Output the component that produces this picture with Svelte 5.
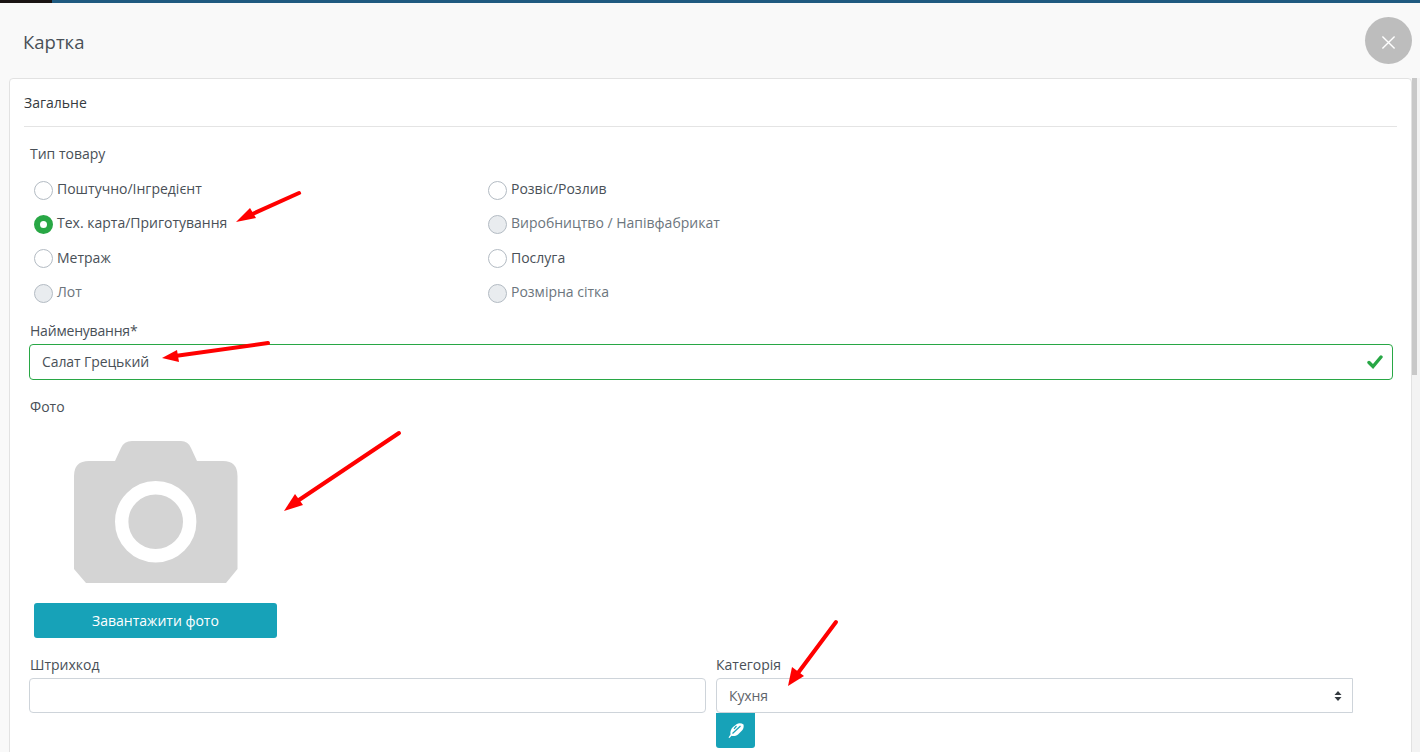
<script>
  const options = [
    { label: 'Поштучно/Інгредієнт', state: '' },
    { label: 'Розвіс/Розлив', state: '' },
    { label: 'Тех. карта/Приготування', state: 'checked' },
    { label: 'Виробництво / Напівфабрикат', state: 'disabled' },
    { label: 'Метраж', state: '' },
    { label: 'Послуга', state: '' },
    { label: 'Лот', state: 'disabled' },
    { label: 'Розмірна сітка', state: 'disabled' }
  ];
  const arrows = [
    'M299 193 L248 216', 'M268 343 L175 356', 'M399 433 L296 502', 'M836 622 L798 673'
  ];
  const heads = [
    '236,222 250,208 256,218', '162,358 177,350 179,362', '284,511 295,494 303,505', '788,686 792,667 804,676'
  ];
</script>

<div class="page">
  <div class="topbar"><span class="dark"></span></div>
  <header class="head">
    <h1>Картка</h1>
    <button class="close" aria-label="Закрити">
      <svg width="15" height="15" viewBox="0 0 16 16"><path d="M1.5 1.5 L14.5 14.5 M14.5 1.5 L1.5 14.5" stroke="#fff" stroke-width="1.5" fill="none"/></svg>
    </button>
  </header>
  <div class="body">
    <main class="card">
      <h2>Загальне</h2>
      <div class="form">
        <div class="lbl type-lbl">Тип товару</div>
        <div class="radios">
          {#each options as r}
            <div class="radio {r.state}"><span class="dot"></span><span>{r.label}</span></div>
          {/each}
        </div>
        <div class="lbl name-lbl">Найменування*</div>
        <div class="input valid">
          <span>Салат Грецький</span>
          <svg width="16" height="14" viewBox="0 0 16 14"><path d="M2 7.500 L6 11.500 L14 2" stroke="#28a745" stroke-width="3.400" stroke-linecap="round" fill="none"/></svg>
        </div>
        <div class="lbl photo-lbl">Фото</div>
        <div class="photo">
          <svg width="164" height="142" viewBox="0 0 164 142">
            <path d="M15 20 H41 L47 7 Q50 0 58 0 H107 Q114 0 117 7 L123 20 H149 Q163.500 20 163.500 35 V128 L152 142 H12 L0 128 V35 Q0 20 15 20 Z" fill="#d4d4d4"/>
            <circle cx="81.700" cy="80.700" r="34" fill="#d4d4d4" stroke="#fff" stroke-width="13.400"/>
          </svg>
        </div>
        <button class="upload">Завантажити фото</button>
        <div class="cols">
          <div class="col">
            <div class="lbl">Штрихкод</div>
            <div class="input plain"></div>
          </div>
          <div class="col">
            <div class="lbl">Категорія</div>
            <div class="input plain select">
              <span>Кухня</span>
              <svg width="8" height="10" viewBox="0 0 8 10"><path d="M4 0 L7.500 4 H0.500 Z M4 10 L0.500 6 H7.500 Z" fill="#343a40"/></svg>
            </div>
            <button class="edit" aria-label="Редагувати">
              <svg width="16" height="15" viewBox="0 0 16 15">
                <path d="M0.500 14.500 L2.500 11.500 C2 8.500 3 6 5 4 L8.500 1.200 C10.500 0 13.500 0 15.500 1.500 C16 3.500 15.500 6 14 7.500 L10 11.500 C8 13 5.500 13.500 3.500 12.800 L1.500 15 Z" fill="#fff"/>
                <path d="M4.500 10.500 L12.500 3 M8.500 3 L6 5.800" stroke="#17a2b8" stroke-width="1.200" fill="none"/>
              </svg>
            </button>
          </div>
        </div>
      </div>
    </main>
    <div class="scrollbar"><span></span></div>
  </div>
  <svg class="marks" width="1420" height="752" viewBox="0 0 1420 752">
    {#each arrows as d}<path {d} stroke="#f00" stroke-width="4" stroke-linecap="round" fill="none"/>{/each}
    {#each heads as points}<polygon {points} fill="#f00"/>{/each}
  </svg>
</div>

<style>
  :global(body) { margin: 0; background: #f9f9f9; overflow: hidden; }
  .page { position: relative; width: 1420px; height: 752px; overflow: hidden; font-family: "Open Sans", "Liberation Sans", sans-serif; font-size: 14px; line-height: 20px; color: #495057; }
  .topbar { height: 3px; background: #1f5a80; }
  .dark { display: block; width: 52px; height: 3px; background: #1a1413; }
  .head { height: 75px; display: flex; justify-content: space-between; align-items: flex-start; padding: 14px 8px 0 23px; box-sizing: border-box; }
  h1 { margin: 11px 0 0; font-size: 18.500px; line-height: 28px; font-weight: 400; color: #495057; }
  .close { width: 47px; height: 47px; border: 0; border-radius: 50%; background: #bdbdbd; display: flex; align-items: center; justify-content: center; padding: 3px 0 0; }
  .body { display: flex; padding-left: 9px; }
  .card { flex: none; width: 1403px; height: 700px; box-sizing: border-box; background: #fff; border: 1px solid #e2e2e2; border-radius: 4px; padding: 0 14px; }
  h2 { margin: 0; height: 48px; border-bottom: 1px solid #e4e4e4; box-sizing: border-box; font-size: 14px; font-weight: 400; line-height: 20px; padding: 14px 0 0 0; color: #343a40; }
  .form { padding: 0 5px; }
  .lbl { line-height: 20px; }
  .type-lbl { margin: 17px 0 0 1px; }
  .radios { display: grid; grid-template-columns: 454px 1fr; grid-auto-rows: 34.330px; margin: 8px 0 0 5px; }
  .radio { display: flex; align-items: center; gap: 4px; }
  .dot { width: 19px; height: 19px; box-sizing: border-box; border: 1px solid #b3bbc3; border-radius: 50%; background: #fff; margin-top: 2px; }
  .radio.checked .dot { border: 6px solid #28a745; }
  .radio.disabled .dot { background: #e9ecef; }
  .radio.disabled { color: #6c757d; }
  .name-lbl { margin: 12px 0 0 1px; letter-spacing: -0.2px; }
  .input { box-sizing: border-box; background: #fff; border: 1px solid #ced4da; border-radius: 4px; display: flex; align-items: center; justify-content: space-between; padding: 0 12px; letter-spacing: -0.1px; }
  .valid { height: 36px; width: 1364px; margin-top: 3px; border-color: #28a745; padding-right: 9px; }
  .photo-lbl { margin: 17px 0 0 1px; }
  .photo { margin: 24px 0 0 45px; height: 142px; }
  .photo svg { display: block; }
  .upload { display: block; margin: 20px 0 0 5px; width: 243px; height: 35px; background: #17a2b8; color: #fff; border: 0; border-radius: 3px; font: 400 14px "Open Sans", sans-serif; }
  .cols { display: flex; margin-top: 17px; }
  .col:first-child { width: 677px; margin-right: 10px; }
  .col:last-child { width: 637px; }
  .cols .lbl { margin-left: 1px; height: 23px; }
  .col:last-child .lbl { margin-left: 0; }
  .plain { height: 35px; }
  .select { border-radius: 4px 0 0 4px; padding-right: 10px; color: #5f656b; }
  .edit { display: flex; align-items: center; justify-content: center; width: 39px; height: 35px; padding: 0; border: 0; border-radius: 0 0 3px 3px; background: #17a2b8; }
  .scrollbar { flex: none; width: 8px; height: 700px; background: #f3f3f3; }
  .scrollbar span { display: block; width: 5px; height: 297px; background: #c8c8c8; }
  .marks { position: absolute; inset: 0; pointer-events: none; }
</style>
